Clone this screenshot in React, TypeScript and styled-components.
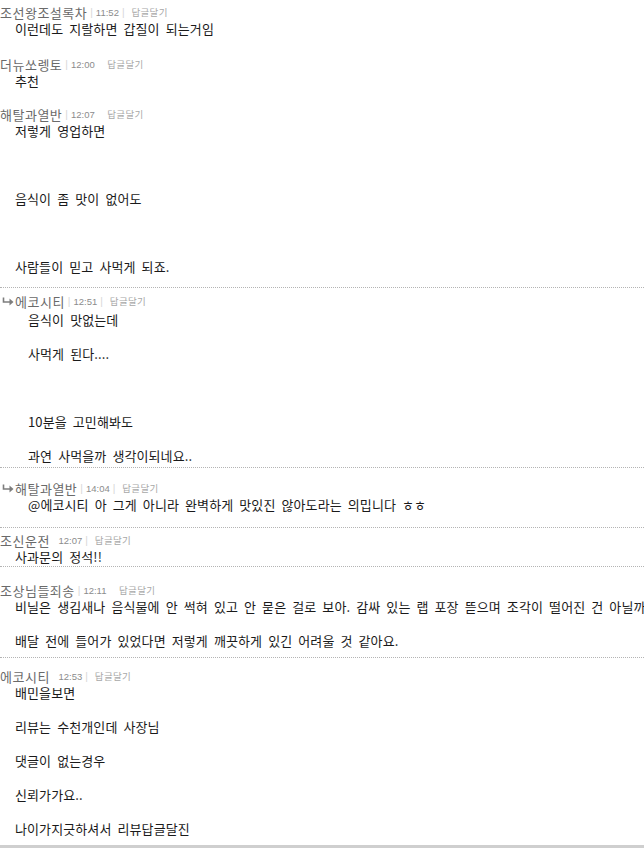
import styled, { createGlobalStyle } from "styled-components";

const GlobalStyle = createGlobalStyle`
    html, body {
        margin: 0;
        padding: 0;
        background: #fff;
        overflow: hidden;
    }
`;

const Page = styled.div`
    width: 644px;
    height: 848px;
    overflow: hidden;
    display: flex;
    flex-direction: column;
    font-family: "Noto Sans CJK KR", "Noto Sans", sans-serif;
`;

const CommentBlock = styled.div<{ $top: number; $bottom: number }>`
    padding-top: ${(p) => p.$top}px;
    padding-bottom: ${(p) => p.$bottom}px;
`;

const Divider = styled.div`
    height: 0;
    border-top: 1px dotted #b4b4b4;
`;

const BottomBar = styled.div`
    margin-top: auto;
    height: 3px;
    background: #cfcfcf;
    flex-shrink: 0;
`;

const Header = styled.div<{ $reply: boolean }>`
    display: flex;
    align-items: center;
    height: 16px;
    padding-left: ${(p) => (p.$reply ? 2 : 0)}px;
    white-space: nowrap;
`;

const Author = styled.span`
    font-size: 13px;
    letter-spacing: 0.5px;
    color: #6a6a6a;
`;

const Sep = styled.span<{ $show: boolean }>`
    font-family: "Liberation Sans", sans-serif;
    font-size: 10px;
    color: ${(p) => (p.$show ? "#d6d6d6" : "transparent")};
    margin: 0 3px;
`;

const Time = styled.span`
    font-family: "Liberation Sans", Arial, sans-serif;
    font-size: 9.5px;
    color: #8c8c8c;
`;

const ReplyLink = styled.span`
    font-size: 9.5px;
    letter-spacing: 0.3px;
    color: #a8a8a8;
    margin-left: 4px;
`;

const ArrowIcon = styled.svg`
    width: 12px;
    height: 9px;
    margin-right: 1px;
    flex-shrink: 0;
`;

const Body = styled.div<{ $reply: boolean; $gap: number }>`
    padding-left: ${(p) => (p.$reply ? 28 : 15)}px;
    margin-top: ${(p) => p.$gap}px;
`;

const Line = styled.div`
    height: 17px;
    line-height: 17px;
    font-size: 13px;
    letter-spacing: 0.1px;
    word-spacing: 3px;
    color: #1a1a1a;
    white-space: nowrap;
`;

type CommentData = {
    author: string;
    time: string;
    lines: string[];
    reply?: boolean;
    sep1: boolean;
    sep2: boolean;
    top: number;
    bottom: number;
    gap?: number;
    divider?: boolean;
};

const comments: CommentData[] = [
    {
        author: "조선왕조설록차",
        time: "11:52",
        lines: ["이런데도 지랄하면 갑질이 되는거임"],
        sep1: true,
        sep2: true,
        top: 4,
        bottom: 19,
    },
    {
        author: "더뉴쏘렝토",
        time: "12:00",
        lines: ["추천"],
        sep1: true,
        sep2: false,
        top: 0,
        bottom: 17,
    },
    {
        author: "해탈과열반",
        time: "12:07",
        lines: [
            "저렇게 영업하면",
            "",
            "",
            "",
            "음식이 좀 맛이 없어도",
            "",
            "",
            "",
            "사람들이 믿고 사먹게 되죠.",
        ],
        sep1: true,
        sep2: false,
        top: 0,
        bottom: 12,
    },
    {
        author: "에코시티",
        time: "12:51",
        reply: true,
        divider: true,
        lines: [
            "음식이 맛없는데",
            "",
            "사먹게 된다....",
            "",
            "",
            "",
            "10분을 고민해봐도",
            "",
            "과연 사먹을까 생각이되네요..",
        ],
        sep1: true,
        sep2: true,
        top: 5,
        bottom: 3,
        gap: 2,
    },
    {
        author: "해탈과열반",
        time: "14:04",
        reply: true,
        divider: true,
        lines: ["@에코시티 아 그게 아니라 완벽하게 맛있진 않아도라는 의밉니다 ㅎㅎ"],
        sep1: true,
        sep2: true,
        top: 12,
        bottom: 14,
    },
    {
        author: "조신운전",
        time: "12:07",
        divider: true,
        lines: ["사과문의 정석!!"],
        sep1: false,
        sep2: true,
        top: 4,
        bottom: 1,
    },
    {
        author: "조상님들죄송",
        time: "12:11",
        divider: true,
        lines: [
            "비닐은 생김새나 음식물에 안 썩혀 있고 안 묻은 걸로 보아. 감싸 있는 랩 포장 뜯으며 조각이 떨어진 건 아닐까 싶네요.",
            "",
            "배달 전에 들어가 있었다면 저렇게 깨끗하게 있긴 어려울 것 같아요.",
        ],
        sep1: true,
        sep2: false,
        top: 15,
        bottom: 8,
    },
    {
        author: "에코시티",
        time: "12:53",
        divider: true,
        lines: [
            "배민을보면",
            "",
            "리뷰는 수천개인데 사장님",
            "",
            "댓글이 없는경우",
            "",
            "신뢰가가요..",
            "",
            "나이가지긋하셔서 리뷰답글달진",
        ],
        sep1: false,
        sep2: true,
        top: 10,
        bottom: 0,
    },
];

const ReplyArrow = () => (
    <ArrowIcon viewBox="0 0 12 9">
        <path d="M1.5 0.5 V5 H8" fill="none" stroke="#7d7d7d" strokeWidth="1.6" />
        <polygon points="7.5,1.5 11.5,5 7.5,8.5" fill="#7d7d7d" />
    </ArrowIcon>
);

const Comment = ({ c }: { c: CommentData }) => (
    <>
        {c.divider && <Divider />}
        <CommentBlock $top={c.top} $bottom={c.bottom}>
            <Header $reply={!!c.reply}>
                {c.reply && <ReplyArrow />}
                <Author>{c.author}</Author>
                <Sep $show={c.sep1}>|</Sep>
                <Time>{c.time}</Time>
                <Sep $show={c.sep2}>|</Sep>
                <ReplyLink>답글달기</ReplyLink>
            </Header>
            <Body $reply={!!c.reply} $gap={c.gap ?? 0}>
                {c.lines.map((line, i) => (
                    <Line key={i}>{line || "\u00a0"}</Line>
                ))}
            </Body>
        </CommentBlock>
    </>
);

export default function App() {
    return (
        <Page>
            <GlobalStyle />
            {comments.map((c, i) => (
                <Comment key={i} c={c} />
            ))}
            <BottomBar />
        </Page>
    );
}
